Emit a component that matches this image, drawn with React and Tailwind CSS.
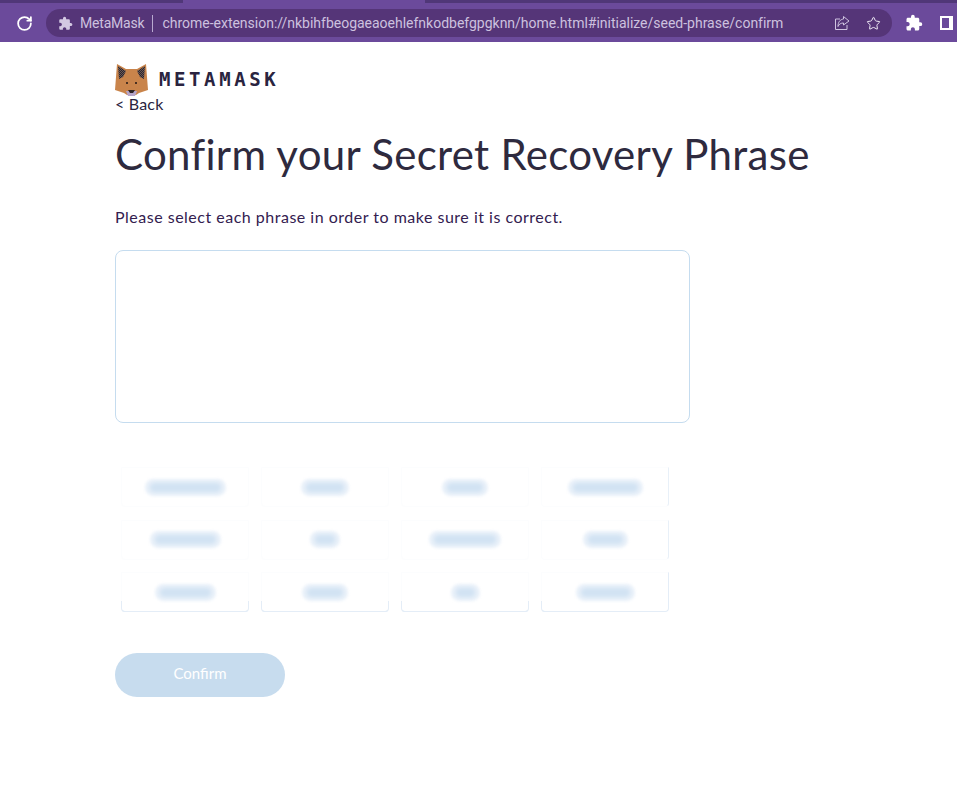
import React from "react";
import { RotateCw, Star } from "lucide-react";
import { MdExtension } from "react-icons/md";

const tiles = [
  ["w-[81px]", ""],
  ["w-[48px]", ""],
  ["w-[46px]", ""],
  ["w-[75px]", "border-r-[#e8f0f8]"],
  ["w-[71px]", ""],
  ["w-[30px]", ""],
  ["w-[72px]", ""],
  ["w-[45px]", "border-r-[#e8f0f8]"],
  ["w-[61px]", "border-b-[#e4edf7]"],
  ["w-[46px]", "border-b-[#e4edf7]"],
  ["w-[29px]", "border-b-[#e4edf7]"],
  ["w-[59px]", "border-b-[#e4edf7] border-r-[#e4edf7]"],
];

function Fox() {
  return (
    <svg width="33" height="32" viewBox="0 0 33 32" className="shrink-0">
      <defs>
        <pattern id="ear" width="2" height="2" patternUnits="userSpaceOnUse">
          <rect width="2" height="2" fill="#6b5a52" />
          <rect width="1" height="1" fill="#2c2430" />
          <rect x="1" y="1" width="1" height="1" fill="#2c2430" />
        </pattern>
      </defs>
      <path d="M2 0 L11 5 L22 5 L31 0 L32 13 L33 26 L24 29 L21 31 L12 31 L9 29 L0 26 L1 13 Z" fill="#c9844b" />
      <path d="M3 2 L11 7 L8 13 L4 15 Z" fill="url(#ear)" />
      <path d="M30 2 L22 7 L25 13 L29 15 Z" fill="url(#ear)" />
      <path d="M11 27 L22 27 L20 32 L13 32 Z" fill="#b5a5c9" />
      <path d="M13 26 L20 26 L18 29 L15 29 Z" fill="#2e2424" />
      <rect x="11" y="18" width="2" height="2" fill="#4a3020" />
      <rect x="20" y="18" width="2" height="2" fill="#4a3020" />
    </svg>
  );
}

export default function App() {
  return (
    <div className="min-h-[785px] bg-white font-['Lato','Liberation_Sans',sans-serif]">
      <header className="relative flex h-[42px] items-center bg-[#6b4a9b] pt-1 pl-[16px] pr-[4px]">
        <div className="absolute left-0 top-0 h-[3px] w-[183px] bg-[#503778]" />
        <div className="absolute right-0 top-0 h-[3px] w-[532px] bg-[#503778]" />
        <RotateCw size={17} strokeWidth={2.5} className="shrink-0 text-white" />
        <div className="ml-[13px] flex h-[28px] w-[847px] items-center rounded-full bg-[#553578] pl-[12px] pr-[10px] text-[14px] text-[#cdc1df]">
          <MdExtension size={15} className="shrink-0 text-[#d3c8e2]" />
          <span className="ml-[7px] font-['Roboto',sans-serif] tracking-[-0.2px]">MetaMask</span>
          <span className="ml-[8px] mr-[9px] h-[17px] w-px bg-[#b9a9d0]" />
          <span className="font-['Roboto',sans-serif] tracking-[-0.01px]">chrome-extension://nkbihfbeogaeaoehlefnkodbefgpgknn/home.html#initialize/seed-phrase/confirm</span>
          <svg width="16" height="16" viewBox="0 0 16 16" fill="none" stroke="#cfc3e0" strokeWidth="1" className="ml-auto shrink-0">
            <path d="M6 4 H1.5 V14.5 H13 V10" />
            <path d="M9.5 1.5 L15 6 L9.5 10 V8 C7 8 5 9 4 11.5 C4 7 6 4.5 9.5 4 Z" />
          </svg>
          <Star size={15} strokeWidth={1.6} className="ml-[16px] mr-px shrink-0 text-[#efeaf6]" />
        </div>
        <MdExtension size={18} className="ml-[13px] shrink-0 text-white" />
        <div className="ml-[17px] h-[14px] w-[13px] shrink-0 border-2 border-r-[4px] border-white" />
      </header>

      <main className="pl-[115px] pt-[22px]">
        <div className="flex h-[31px] items-center">
          <Fox />
          <span className="ml-[11px] font-['DejaVu_Sans_Mono',monospace] text-[19px] font-bold leading-none tracking-[3.6px] text-[#2a2440]">METAMASK</span>
        </div>
        <div className="h-[20px] text-[16px] leading-[18px] tracking-[0.2px] text-[#2a2440]">&lt; Back</div>
        <h1 className="mt-[14px] text-[42px] font-normal leading-[50px] tracking-[0.3px] text-[#2e2a3e]">Confirm your Secret Recovery Phrase</h1>
        <p className="mt-[28px] text-[16px] leading-[20px] tracking-[0.5px] text-[#33204f]">Please select each phrase in order to make sure it is correct.</p>
        <div className="mt-[23px] h-[173px] w-[575px] rounded-lg border border-[#c5dcef]" />
        <div className="ml-[6px] mt-[44px] grid w-[548px] grid-cols-4 gap-x-3 gap-y-[12.5px]">
          {tiles.map(([w, b], i) => (
            <div key={i} className={`relative flex h-[40px] items-center justify-center rounded-b border border-[#fcfdfe] ${b}`}>
              <div className={`flex h-[17px] items-center rounded-full bg-[#e8f0f9] px-[5px] blur-[1.5px] ${w}`}>
                <div className="h-[9px] w-full rounded-full bg-[#d2e3f3] blur-[1px]" />
              </div>
              {i >= 8 && <span className="absolute -left-px -bottom-px h-[11px] w-[4px] rounded-bl border-b border-l border-[#e4edf7]" />}
              {i >= 8 && i < 11 && <span className="absolute -right-px -bottom-px h-[11px] w-[4px] rounded-br border-b border-r border-[#e4edf7]" />}
            </div>
          ))}
        </div>
        <button className="mt-[41px] h-[44px] w-[170px] rounded-full bg-[#c7dcee] pb-[3px] text-[15px] text-white">Confirm</button>
      </main>
    </div>
  );
}
